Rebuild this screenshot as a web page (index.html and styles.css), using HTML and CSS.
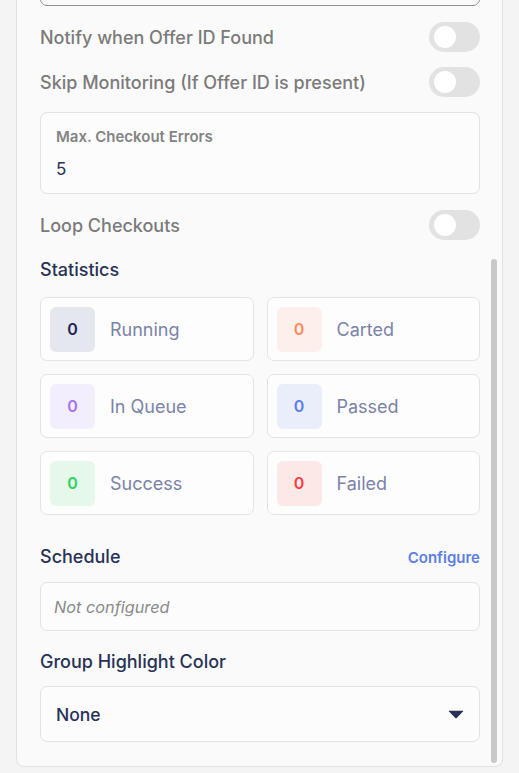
FILE: index.html
```html
<!DOCTYPE html>
<html lang="en">
<head>
<meta charset="utf-8">
<title>Task Group Settings</title>
<link rel="stylesheet" href="styles.css">
</head>
<body>
<div class="panel">
  <div class="top-input"></div>

  <div class="toggle-row">
    <span class="toggle-label">Notify when Offer ID Found</span>
    <span class="toggle"><span class="knob"></span></span>
  </div>
  <div class="toggle-row">
    <span class="toggle-label">Skip Monitoring (If Offer ID is present)</span>
    <span class="toggle"><span class="knob"></span></span>
  </div>

  <div class="field-box">
    <div class="field-label">Max. Checkout Errors</div>
    <div class="field-value">5</div>
  </div>

  <div class="toggle-row loop">
    <span class="toggle-label">Loop Checkouts</span>
    <span class="toggle"><span class="knob"></span></span>
  </div>

  <h3 class="section-title stats-title">Statistics</h3>
  <div class="stats-grid">
    <div class="stat"><span class="badge running">0</span><span class="stat-label">Running</span></div>
    <div class="stat"><span class="badge carted">0</span><span class="stat-label">Carted</span></div>
    <div class="stat"><span class="badge queue">0</span><span class="stat-label">In Queue</span></div>
    <div class="stat"><span class="badge passed">0</span><span class="stat-label">Passed</span></div>
    <div class="stat"><span class="badge success">0</span><span class="stat-label">Success</span></div>
    <div class="stat"><span class="badge failed">0</span><span class="stat-label">Failed</span></div>
  </div>

  <div class="schedule-head">
    <h3 class="section-title">Schedule</h3>
    <a class="configure">Configure</a>
  </div>
  <div class="schedule-box">Not configured</div>

  <h3 class="section-title color-title">Group Highlight Color</h3>
  <div class="select">
    <span class="select-value">None</span>
    <svg class="caret" width="16" height="9" viewBox="0 0 16 9"><path d="M1.2 0.8 H14.8 Q15.6 0.8 15 1.5 L8.7 7.9 Q8 8.6 7.3 7.9 L1 1.5 Q0.4 0.8 1.2 0.8 Z" fill="#283156"/></svg>
  </div>

  <div class="scrollbar"></div>
</div>
</body>
</html>
```

FILE: styles.css
```css
* { box-sizing: border-box; }

html, body {
  margin: 0;
  padding: 0;
  background: #f4f4f4;
  font-family: Inter, "Noto Sans", "Liberation Sans", sans-serif;
  overflow: hidden;
}

.panel {
  position: relative;
  width: 487px;
  margin: -44px 0 0 16px;
  padding: 0 22px 24px 23px;
  background: #fafafa;
  border: 1px solid #e2e2e2;
  border-top: none;
  border-radius: 0 0 8px 8px;
  display: flex;
  flex-direction: column;
}

.top-input {
  height: 50px;
  border: 1px solid #8e8e8e;
  border-radius: 7px;
  background: #fafafa;
  margin-bottom: 16px;
}

.toggle-row {
  height: 30px;
  display: flex;
  align-items: center;
  justify-content: space-between;
  margin-bottom: 15px;
}

.toggle-row.loop { margin-bottom: 20px; }

.toggle-label {
  font-size: 18px;
  font-weight: 500;
  color: #7b7b7b;
}

.toggle {
  position: relative;
  width: 51px;
  height: 30px;
  border-radius: 15px;
  background: #e2e2e2;
}

.knob {
  position: absolute;
  left: 5px;
  top: 4px;
  width: 22px;
  height: 22px;
  border-radius: 50%;
  background: #ffffff;
}

.field-box {
  height: 82px;
  border: 1px solid #e3e3e3;
  border-radius: 7px;
  background: #fcfcfc;
  padding: 15px 15px 0 15px;
  margin-bottom: 16px;
}

.field-label {
  font-size: 15px;
  font-weight: 600;
  color: #838383;
  line-height: 18px;
}

.field-value {
  margin-top: 13px;
  font-size: 17px;
  color: #283156;
  line-height: 20px;
}

.section-title {
  margin: 0;
  font-size: 18px;
  font-weight: 500;
  color: #283156;
  line-height: 20px;
}

.stats-title { margin-bottom: 17px; }

.stats-grid {
  display: grid;
  grid-template-columns: 1fr 1fr;
  gap: 13px;
  margin-bottom: 32px;
}

.stat {
  height: 64px;
  border: 1px solid #e4e4e7;
  border-radius: 7px;
  background: #fdfdfd;
  display: flex;
  align-items: center;
  padding: 0 9px;
  gap: 15px;
}

.badge {
  width: 45px;
  height: 45px;
  border-radius: 6px;
  display: flex;
  align-items: center;
  justify-content: center;
  font-size: 16px;
  font-weight: 600;
}

.badge.running { background: #e5e7ee; color: #1f2557; }
.badge.carted  { background: #fdf0ec; color: #fb8c5a; }
.badge.queue   { background: #f3eefd; color: #a374f7; }
.badge.passed  { background: #eaeefb; color: #5b7ee5; }
.badge.success { background: #e6f8ea; color: #2dd35e; }
.badge.failed  { background: #fde8e8; color: #f43f46; }

.stat-label {
  font-size: 18px;
  color: #7b83a8;
}

.schedule-head {
  display: flex;
  justify-content: space-between;
  align-items: center;
  margin-bottom: 15px;
}

.configure {
  font-size: 15px;
  font-weight: 600;
  color: #5b7ee5;
}

.schedule-box {
  height: 49px;
  border: 1px solid #e3e3e3;
  border-radius: 7px;
  background: #fcfcfc;
  display: flex;
  align-items: center;
  padding: 0 13px;
  font-size: 16.3px;
  font-style: italic;
  color: #8a8a8a;
  margin-bottom: 21px;
}

.color-title { margin-bottom: 14px; }

.select {
  height: 56px;
  border: 1px solid #e3e3e3;
  border-radius: 7px;
  background: #fcfcfc;
  display: flex;
  align-items: center;
  justify-content: space-between;
  padding: 0 15px 0 15px;
}

.select-value {
  font-size: 17.5px;
  font-weight: 500;
  color: #283156;
}

.scrollbar {
  position: absolute;
  left: 474px;
  top: 303px;
  width: 6px;
  height: 504px;
  border-radius: 3px;
  background: #c8c8c8;
}
```
